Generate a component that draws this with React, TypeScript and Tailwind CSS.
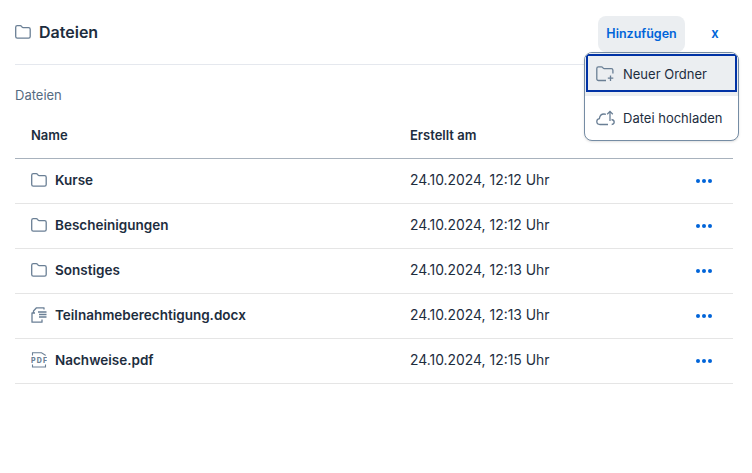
const font = { fontFamily: 'Inter, "Noto Sans", sans-serif' };

function FolderIcon({ className }: { className?: string }) {
  return (
    <svg className={className} width="16" height="14" viewBox="0 0 16 14" fill="none" stroke="#6a7f95" strokeWidth="1.3">
      <path d="M0.7 2.3c0-.9.7-1.6 1.6-1.6h3c.5 0 .9.2 1.2.6l.8 1c.2.2.4.3.7.3h5.6c.9 0 1.6.7 1.6 1.6v7.3c0 1-.7 1.7-1.6 1.7H2.3c-.9 0-1.6-.7-1.6-1.7V2.3z" />
    </svg>
  );
}

function DocIcon() {
  return (
    <svg width="16" height="16" viewBox="0 0 16 16" fill="none" stroke="#6a7f95" strokeWidth="1.3">
      <path d="M13 2.5V.8H5.5L2.5 4v2" strokeLinejoin="round" />
      <path d="M4 6H1v9.2h10V12.5" strokeLinejoin="round" />
      <path d="M7 5h8.5M8 7.5h7.5M8 10h7.5" />
    </svg>
  );
}

function PdfIcon() {
  return (
    <svg width="16" height="16" viewBox="0 0 16 16" fill="none">
      <path d="M1.5 3.5V.7h9l4 2.5v.3M1.5 12.5v2.5h13v-2.5" stroke="#6a7f95" strokeWidth="1.1" />
      <text x="0" y="10.5" fontSize="7" fontWeight="800" textLength="16" lengthAdjust="spacing" fill="#6a7f95" style={font}>PDF</text>
    </svg>
  );
}

function NewFolderIcon() {
  return (
    <svg width="19" height="16" viewBox="0 0 19 16" fill="none" stroke="#6a7f95" strokeWidth="1.3">
      <path d="M10 14.5H2.4c-.9 0-1.6-.7-1.6-1.6V2.4C.8 1.5 1.5.8 2.4.8h3c.5 0 .9.2 1.2.6l.8 1c.2.2.4.3.7.3h7.2c.9 0 1.6.7 1.6 1.6v3.2" />
      <path d="M14.5 9.5v5.5M11.8 12.2h5.5" />
    </svg>
  );
}

function CloudIcon() {
  return (
    <svg width="19" height="16" viewBox="0 0 19 16" fill="none" stroke="#6a7f95" strokeWidth="1.3">
      <path d="M12 14.5H4C2 14.5.8 13.2.8 11.6c0-1.6 1.1-2.8 2.6-3 .3-2.6 2.2-4.6 4.6-4.6 .7 0 1.3.1 1.9.4" />
      <path d="M15.5 9.5c1.4.2 2.7 1 2.7 2.6 0 1.5-1.2 2.4-2.5 2.4" />
      <path d="M14 11V1.5M11.2 4.2L14 1.4l2.8 2.8" />
    </svg>
  );
}

const rows = [
  { name: 'Kurse', date: '24.10.2024, 12:12 Uhr', icon: <FolderIcon /> },
  { name: 'Bescheinigungen', date: '24.10.2024, 12:12 Uhr', icon: <FolderIcon /> },
  { name: 'Sonstiges', date: '24.10.2024, 12:13 Uhr', icon: <FolderIcon /> },
  { name: 'Teilnahmeberechtigung.docx', date: '24.10.2024, 12:13 Uhr', icon: <DocIcon /> },
  { name: 'Nachweise.pdf', date: '24.10.2024, 12:15 Uhr', icon: <PdfIcon /> },
];

export default function App() {
  return (
    <div className="relative h-[473px] w-[752px] overflow-hidden bg-white pl-[15px] pr-[19px] font-['Inter',sans-serif] text-[#1d2d3e]">
      <div className="flex h-[65px] items-start justify-between border-b border-[#e5e8ee] pt-4">
        <div className="flex h-8 items-center gap-2">
          <FolderIcon />
          <h1 className="text-base leading-none font-semibold">Dateien</h1>
        </div>
        <div className="flex items-center">
          <button className="h-[36px] w-[87px] rounded-lg bg-[#ebeef1] text-[12.5px] font-semibold text-[#0064d9]">
            Hinzufügen
          </button>
          <button className="h-[36px] w-[48px] pl-3 text-[13px] font-semibold text-[#0064d9]">x</button>
        </div>
      </div>

      <p className="mt-[22px] text-[13px] leading-4 text-[#556b82]">Dateien</p>

      <div className="mt-2">
        <div className="grid h-[48px] grid-cols-[379px_1fr_auto] items-center border-b border-[#a8b2bd] pt-[2px] pl-4 text-[13px] font-semibold">
          <span>Name</span>
          <span>Erstellt am</span>
        </div>
        {rows.map((row) => (
          <div
            key={row.name}
            className="grid h-[45px] grid-cols-[379px_1fr_auto] items-center border-b border-[#e5e5e5] pl-4"
          >
            <div className="flex items-center gap-2 pb-[2px]">
              <span className="flex w-4 justify-center">{row.icon}</span>
              <span className="text-[13.5px] font-semibold">{row.name}</span>
            </div>
            <span className="pb-[2px] text-[13.9px]">{row.date}</span>
            <div className="mr-[21px] flex gap-[2px]">
              <span className="h-1 w-1 rounded-full bg-[#0064d9]" />
              <span className="h-1 w-1 rounded-full bg-[#0064d9]" />
              <span className="h-1 w-1 rounded-full bg-[#0064d9]" />
            </div>
          </div>
        ))}
      </div>

      <div className="absolute top-[52px] left-[584px] w-[155px] overflow-hidden rounded-lg border border-[#758ca4] bg-white text-[13px] shadow-sm">
        <div className="bg-[#ebeef1] p-[1px] pb-[4px]">
          <div className="flex h-[38px] items-center gap-2 border-2 border-[#0032a5] pt-[1px] pl-[8px]">
            <NewFolderIcon />
            <span className="pt-[2px]">Neuer Ordner</span>
          </div>
        </div>
        <div className="flex h-[44px] items-center gap-2 pl-[11px]">
          <CloudIcon />
          <span className="pt-[2px]">Datei hochladen</span>
        </div>
      </div>
    </div>
  );
}
